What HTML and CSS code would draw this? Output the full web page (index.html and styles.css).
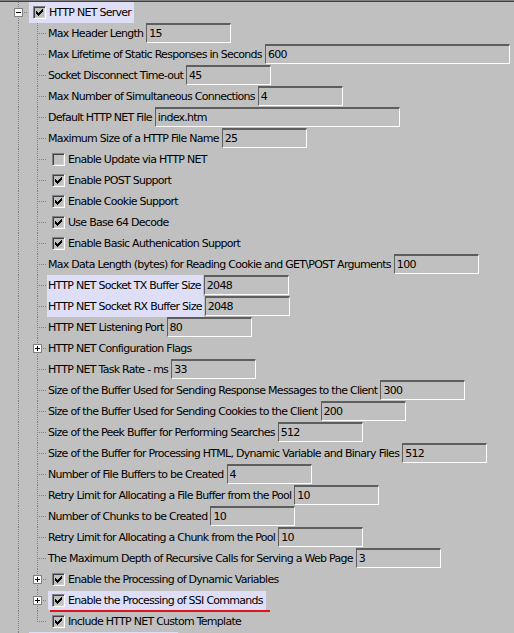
FILE: index.html
```html
<!DOCTYPE html>
<html>
<head>
<meta charset="utf-8">
<link rel="stylesheet" href="styles.css">
</head>
<body>
<div class="tree">
  <div class="row">
    <span class="cell tee"><span class="exp"></span></span>
    <span class="item root"><span class="cb"><svg width="7" height="7" viewBox="0 0 7 7" shape-rendering="crispEdges"><path d="M0 2h1v3H0zM1 3h1v3H1zM2 4h1v3H2zM3 3h1v3H3zM4 2h1v3H4zM5 1h1v3H5zM6 0h1v3H6z"/></svg></span><span class="txt">HTTP NET Server</span></span>
  </div>
  <div class="row"><span class="cell pass"></span><span class="cell tee"></span><span class="lbl">Max Header Length</span><span class="field">15</span></div>
  <div class="row"><span class="cell pass"></span><span class="cell tee"></span><span class="lbl">Max Lifetime of Static Responses in Seconds</span><span class="field wide">600</span></div>
  <div class="row"><span class="cell pass"></span><span class="cell tee"></span><span class="lbl">Socket Disconnect Time-out</span><span class="field">45</span></div>
  <div class="row"><span class="cell pass"></span><span class="cell tee"></span><span class="lbl">Max Number of Simultaneous Connections</span><span class="field">4</span></div>
  <div class="row"><span class="cell pass"></span><span class="cell tee"></span><span class="lbl">Default HTTP NET File</span><span class="field wide">index.htm</span></div>
  <div class="row"><span class="cell pass"></span><span class="cell tee"></span><span class="lbl">Maximum Size of a HTTP File Name</span><span class="field">25</span></div>
  <div class="row"><span class="cell pass"></span><span class="cell tee"></span><span class="item"><span class="cb"></span><span class="txt">Enable Update via HTTP NET</span></span></div>
  <div class="row"><span class="cell pass"></span><span class="cell tee"></span><span class="item"><span class="cb"><svg width="7" height="7" viewBox="0 0 7 7" shape-rendering="crispEdges"><path d="M0 2h1v3H0zM1 3h1v3H1zM2 4h1v3H2zM3 3h1v3H3zM4 2h1v3H4zM5 1h1v3H5zM6 0h1v3H6z"/></svg></span><span class="txt">Enable POST Support</span></span></div>
  <div class="row"><span class="cell pass"></span><span class="cell tee"></span><span class="item"><span class="cb"><svg width="7" height="7" viewBox="0 0 7 7" shape-rendering="crispEdges"><path d="M0 2h1v3H0zM1 3h1v3H1zM2 4h1v3H2zM3 3h1v3H3zM4 2h1v3H4zM5 1h1v3H5zM6 0h1v3H6z"/></svg></span><span class="txt">Enable Cookie Support</span></span></div>
  <div class="row"><span class="cell pass"></span><span class="cell tee"></span><span class="item"><span class="cb"><svg width="7" height="7" viewBox="0 0 7 7" shape-rendering="crispEdges"><path d="M0 2h1v3H0zM1 3h1v3H1zM2 4h1v3H2zM3 3h1v3H3zM4 2h1v3H4zM5 1h1v3H5zM6 0h1v3H6z"/></svg></span><span class="txt">Use Base 64 Decode</span></span></div>
  <div class="row"><span class="cell pass"></span><span class="cell tee"></span><span class="item"><span class="cb"><svg width="7" height="7" viewBox="0 0 7 7" shape-rendering="crispEdges"><path d="M0 2h1v3H0zM1 3h1v3H1zM2 4h1v3H2zM3 3h1v3H3zM4 2h1v3H4zM5 1h1v3H5zM6 0h1v3H6z"/></svg></span><span class="txt">Enable Basic Authenication Support</span></span></div>
  <div class="row"><span class="cell pass"></span><span class="cell tee"></span><span class="lbl">Max Data Length (bytes) for Reading Cookie and GET\POST Arguments</span><span class="field">100</span></div>
  <div class="row"><span class="cell pass"></span><span class="cell tee"></span><span class="lbl hl">HTTP NET Socket TX Buffer Size</span><span class="field">2048</span></div>
  <div class="row"><span class="cell pass"></span><span class="cell tee"></span><span class="lbl hl">HTTP NET Socket RX Buffer Size</span><span class="field">2048</span></div>
  <div class="row"><span class="cell pass"></span><span class="cell tee"></span><span class="lbl">HTTP NET Listening Port</span><span class="field">80</span></div>
  <div class="row"><span class="cell pass"></span><span class="cell tee"><span class="exp plus"></span></span><span class="lbl">HTTP NET Configuration Flags</span></div>
  <div class="row"><span class="cell pass"></span><span class="cell tee"></span><span class="lbl">HTTP NET Task Rate - ms</span><span class="field">33</span></div>
  <div class="row"><span class="cell pass"></span><span class="cell tee"></span><span class="lbl">Size of the Buffer Used for Sending Response Messages to the Client</span><span class="field">300</span></div>
  <div class="row"><span class="cell pass"></span><span class="cell tee"></span><span class="lbl">Size of the Buffer Used for Sending Cookies to the Client</span><span class="field">200</span></div>
  <div class="row"><span class="cell pass"></span><span class="cell tee"></span><span class="lbl">Size of the Peek Buffer for Performing Searches</span><span class="field">512</span></div>
  <div class="row"><span class="cell pass"></span><span class="cell tee"></span><span class="lbl">Size of the Buffer for Processing HTML, Dynamic Variable and Binary Files</span><span class="field">512</span></div>
  <div class="row"><span class="cell pass"></span><span class="cell tee"></span><span class="lbl">Number of File Buffers to be Created</span><span class="field">4</span></div>
  <div class="row"><span class="cell pass"></span><span class="cell tee"></span><span class="lbl">Retry Limit for Allocating a File Buffer from the Pool</span><span class="field">10</span></div>
  <div class="row"><span class="cell pass"></span><span class="cell tee"></span><span class="lbl">Number of Chunks to be Created</span><span class="field">10</span></div>
  <div class="row"><span class="cell pass"></span><span class="cell tee"></span><span class="lbl">Retry Limit for Allocating a Chunk from the Pool</span><span class="field">10</span></div>
  <div class="row"><span class="cell pass"></span><span class="cell tee"></span><span class="lbl">The Maximum Depth of Recursive Calls for Serving a Web Page</span><span class="field">3</span></div>
  <div class="row"><span class="cell pass"></span><span class="cell tee"><span class="exp plus"></span></span><span class="item"><span class="cb"><svg width="7" height="7" viewBox="0 0 7 7" shape-rendering="crispEdges"><path d="M0 2h1v3H0zM1 3h1v3H1zM2 4h1v3H2zM3 3h1v3H3zM4 2h1v3H4zM5 1h1v3H5zM6 0h1v3H6z"/></svg></span><span class="txt">Enable the Processing of Dynamic Variables</span></span></div>
  <div class="row"><span class="cell pass"></span><span class="cell tee"><span class="exp plus"></span></span><span class="item mark"><span class="cb"><svg width="7" height="7" viewBox="0 0 7 7" shape-rendering="crispEdges"><path d="M0 2h1v3H0zM1 3h1v3H1zM2 4h1v3H2zM3 3h1v3H3zM4 2h1v3H4zM5 1h1v3H5zM6 0h1v3H6z"/></svg></span><span class="txt">Enable the Processing of SSI Commands</span></span></div>
  <div class="row"><span class="cell pass"></span><span class="cell last"></span><span class="item"><span class="cb"><svg width="7" height="7" viewBox="0 0 7 7" shape-rendering="crispEdges"><path d="M0 2h1v3H0zM1 3h1v3H1zM2 4h1v3H2zM3 3h1v3H3zM4 2h1v3H4zM5 1h1v3H5zM6 0h1v3H6z"/></svg></span><span class="txt">Include HTTP NET Custom Template</span></span></div>
  <div class="row"><span class="cell tee"></span><span class="item root next"></span></div>
</div>
</body>
</html>
```

FILE: styles.css
```css
html, body {
  margin: 0;
  padding: 0;
  background: #c0c0c0;
  overflow: hidden;
}

body {
  font-family: "DejaVu Sans", Verdana, sans-serif;
  font-size: 11px;
  letter-spacing: -0.73px;
  color: #000;
}

.tree {
  border-top: 1px solid #808080;
  box-shadow: inset 0 1px 0 #404040;
  padding: 1px 0 0 9px;
}

.row {
  display: flex;
  align-items: flex-start;
  height: 21px;
  white-space: nowrap;
}

.cell {
  flex: none;
  width: 19px;
  height: 21px;
  display: flex;
  align-items: center;
}

.pass {
  background: repeating-linear-gradient(to bottom, #808080 0 1px, transparent 1px 2px) 9px 0 / 1px 21px no-repeat;
}

.tee {
  background:
    repeating-linear-gradient(to right, #808080 0 1px, transparent 1px 2px) 9px 10px / 10px 1px no-repeat,
    repeating-linear-gradient(to bottom, #808080 0 1px, transparent 1px 2px) 9px 0 / 1px 21px no-repeat;
}

.last {
  background:
    repeating-linear-gradient(to right, #808080 0 1px, transparent 1px 2px) 9px 10px / 10px 1px no-repeat,
    repeating-linear-gradient(to bottom, #808080 0 1px, transparent 1px 2px) 9px 0 / 1px 11px no-repeat;
}

.exp {
  width: 9px;
  height: 9px;
  box-sizing: border-box;
  margin-left: 5px;
  border: 1px solid #808080;
  background: linear-gradient(#000, #000) center / 5px 1px no-repeat, #fff;
}

.exp.plus {
  background:
    linear-gradient(#000, #000) center / 5px 1px no-repeat,
    linear-gradient(#000, #000) center / 1px 5px no-repeat,
    #fff;
}

.item {
  display: flex;
  align-items: flex-start;
  height: 21px;
  margin-left: 1px;
  padding: 0 3px 0 4px;
  position: relative;
}

.item.root {
  background: #dedef7;
}

.item.next {
  width: 149px;
  box-sizing: border-box;
}

.item.mark {
  background: linear-gradient(#dedef7, #dedef7) 0 1px / 100% 19px no-repeat;
}

.item.mark::after {
  content: "";
  position: absolute;
  left: 2px;
  right: -4px;
  top: 20px;
  height: 2px;
  background: #e3121b;
}

.cb {
  flex: none;
  width: 13px;
  height: 13px;
  box-sizing: border-box;
  margin: 4px 3px 0 0;
  padding: 2px;
  border: 1px solid;
  border-color: #808080 #fff #fff #808080;
  box-shadow: inset 1px 1px 0 #404040, inset -1px -1px 0 #d4d0c8;
  background: #c0c0c0;
}

.cb svg {
  display: block;
  fill: #000;
}

.txt {
  line-height: 21px;
}

.lbl {
  line-height: 21px;
  height: 21px;
  padding: 0 2px 0 1px;
}

.lbl.hl {
  background: #dedef7;
}

.field {
  flex: none;
  width: 85px;
  height: 20px;
  box-sizing: border-box;
  margin-left: 1px;
  border-style: solid;
  border-width: 2px 1px 1px 1px;
  border-color: #5e5e5e #fff #fff #5e5e5e;
  line-height: 17px;
  padding-left: 2px;
}

.field.wide {
  width: 245px;
}
```
